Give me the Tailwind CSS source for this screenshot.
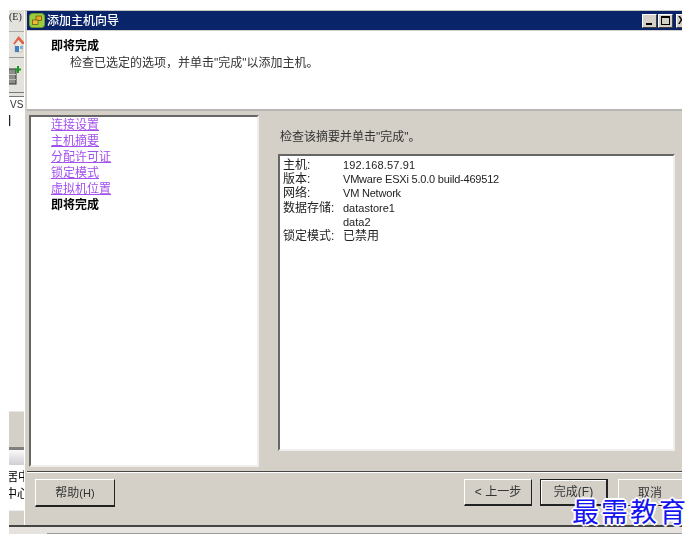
<!DOCTYPE html>
<html lang="zh-CN">
<head>
  <meta charset="UTF-8">
  <title>添加主机向导</title>
  <script src="https://cdn.jsdelivr.net/npm/@tailwindcss/browser@4"></script>
</head>
<body class="bg-white">
  <div class="relative w-[694px] h-[541px] overflow-hidden bg-white pt-[10px] pl-[9px] pr-[12px] pb-[7px] font-['Liberation_Sans','Noto_Sans_CJK_SC',sans-serif] text-[12px] text-[#222]">
    <div class="flex flex-col h-full blur-[0.3px]">
      <div class="flex h-[515px]">
        <!-- main window behind the wizard -->
        <div class="w-[15px] flex flex-col overflow-hidden shrink-0 bg-white">
          <div class="h-[22px] bg-[#e4e2dd] border-b border-[#aaa] text-[10px] leading-[12px] pt-[1px] font-['Liberation_Serif','Noto_Sans_CJK_SC',serif] whitespace-nowrap">(E)</div>
          <div class="h-[26px] bg-[#e4e2dd] border-b border-[#999] flex justify-end items-center">
            <svg width="11" height="17" viewBox="0 0 11 17" class="shrink-0">
              <path d="M0 8 L5.5 0 L11 6 V8 H9 L5.5 4 L2 8Z" fill="#e0604a"/>
              <path d="M2 8 L5.5 4 L9 8 V16 H2Z" fill="#efe9da" stroke="#b9a98a" stroke-width="0.5"/>
              <rect x="2" y="10" width="4" height="6" fill="#3f7fc4"/>
              <rect x="7" y="10" width="3" height="3" fill="#7fb0dc"/>
            </svg>
          </div>
          <div class="h-[34px] bg-[#e4e2dd]">
            <svg width="15" height="20" viewBox="0 0 15 20" class="mt-[8px]">
              <rect x="-1" y="3" width="8" height="15" fill="#8e8e88" stroke="#333"/>
              <rect x="0" y="8" width="7" height="1" fill="#ccc"/>
              <rect x="0" y="13" width="7" height="1" fill="#bbb"/>
              <path d="M9 0 V7 M6 3.5 H12" stroke="#1a9a22" stroke-width="2" fill="none"/>
            </svg>
          </div>
          <div class="h-[5px] bg-[#e4e2dd] border-y border-[#777]"></div>
          <div class="h-[314px] bg-white">
            <div class="text-[10px] leading-[12px] pt-[2px] pl-[1px] text-[#333] flex items-center">VS<span class="w-[1px] h-[11px] bg-[#333] ml-[1px]"></span></div>
            <div class="mt-[4px] w-[2px] h-[11px] bg-[#222] border-r border-[#bcd]"></div>
          </div>
          <div class="h-[36px] bg-[#d4d0c8] border-t border-[#e8e6e2]"></div>
          <div class="h-[3px] bg-[#808080]"></div>
          <div class="h-[15px] bg-gradient-to-b from-[#fafafa] to-[#cfcfd4]"></div>
          <div class="h-[45px] bg-white text-[12px] leading-[17px] pt-[4px] text-black whitespace-nowrap">
            <div class="-ml-[3px]">居中</div>
            <div class="-ml-[4px]">中心</div>
          </div>
          <div class="flex-1 bg-[#d4d0c8] border-t border-[#eee]"></div>
        </div>

        <!-- wizard -->
        <div class="flex-1 min-w-0 flex flex-col overflow-hidden bg-[#d4d0c8] border-l border-white pl-[2px] border-t border-t-[#c8c6c0]">
          <div class="h-[19px] shrink-0 flex items-center bg-[#0a246a] pl-[2px] text-white text-[12px]">
            <svg width="16" height="15" viewBox="0 0 16 15" class="shrink-0">
              <rect x="0.5" y="0.5" width="15" height="14" rx="3" fill="#9ccc40" stroke="#6f9a28"/>
              <rect x="7" y="3" width="5.5" height="4.5" fill="#f0a818" stroke="#5a5018" stroke-width="0.7"/>
              <rect x="3.5" y="7" width="5.5" height="4.5" fill="#f6bc30" stroke="#5a5018" stroke-width="0.7"/>
            </svg>
            <span class="ml-[2px] font-medium">添加主机向导</span>
            <div class="ml-auto flex items-start -mr-[9px]">
              <div class="w-[15px] h-[14px] bg-[#d4d0c8] border-t border-l border-white border-r border-b border-r-[#404040] border-b-[#404040] flex items-end justify-center pb-[2px]">
                <span class="block w-[6px] h-[2px] bg-black -ml-[1px]"></span>
              </div>
              <div class="w-[15px] h-[14px] ml-[1px] bg-[#d4d0c8] border-t border-l border-white border-r border-b border-r-[#404040] border-b-[#404040] flex items-center justify-center">
                <span class="block w-[9px] h-[9px] border border-black border-t-2"></span>
              </div>
              <div class="w-[15px] h-[14px] ml-[3px] bg-[#d4d0c8] border-t border-l border-white border-r border-b border-r-[#404040] border-b-[#404040] text-black text-[11px] font-bold leading-[11px] pl-[1px]">X</div>
            </div>
          </div>
          <div class="h-[80px] shrink-0 mt-[1px] bg-white border-b-2 border-[#b8b6b2] pl-[24px] pt-[7px]">
            <div class="font-bold text-black leading-[16px]">即将完成</div>
            <div class="ml-[19px] mt-[1px] leading-[16px] text-[#333]">检查已选定的选项，并单击"完成"以添加主机。</div>
          </div>

          <div class="flex h-[360px] shrink-0">
            <div class="mt-[4px] ml-[2px] w-[230px] h-[352px] bg-white border-2 border-t-[#666] border-l-[#666] border-r-[#eee] border-b-[#eee] pl-[20px] leading-[16px]">
              <a class="block underline text-[#a24ff0]">连接设置</a>
              <a class="block underline text-[#a24ff0]">主机摘要</a>
              <a class="block underline text-[#a24ff0]">分配许可证</a>
              <a class="block underline text-[#a24ff0]">锁定模式</a>
              <a class="block underline text-[#a24ff0]">虚拟机位置</a>
              <div class="font-bold text-black">即将完成</div>
            </div>
            <div class="flex-1 pl-[19px] pr-[7px] pt-[18px]">
              <div class="leading-[16px] pl-[2px] text-[#333]">检查该摘要并单击"完成"。</div>
              <div class="mt-[9px] h-[297px] bg-white border-2 border-t-[#666] border-l-[#666] border-r-[#eee] border-b-[#eee] pl-[3px] pt-[2px]">
                <div class="grid grid-cols-[60px_1fr] leading-[14.2px] text-[#222]">
                  <span>主机:</span><span class="text-[11px] tracking-[0.15px]">192.168.57.91</span>
                  <span>版本:</span><span class="text-[11px] tracking-[-0.2px]">VMware ESXi 5.0.0 build-469512</span>
                  <span>网络:</span><span class="text-[11px] tracking-[-0.2px]">VM Network</span>
                  <span>数据存储:</span><span class="text-[11px]">datastore1</span>
                  <span></span><span class="text-[11px]">data2</span>
                  <span>锁定模式:</span><span>已禁用</span>
                </div>
              </div>
            </div>
          </div>

          <div class="flex-1 border-t border-[#444] flex items-start pt-[7px] relative before:absolute before:inset-x-0 before:top-0 before:h-[1px] before:bg-white">
            <button class="ml-[8px] w-[80px] h-[28px] bg-[#d4d0c8] border border-t-white border-l-white border-r-[#222] border-b-[#222] border-b-2 text-[#333]">帮助<span class="text-[11px]">(H)</span></button>
            <div class="ml-auto flex gap-[8px] -mr-[4px]">
              <button class="w-[68px] h-[27px] bg-[#d4d0c8] border border-t-white border-l-white border-r-[#222] border-b-[#222] border-b-2 text-[#333]">&lt; 上一步</button>
              <button class="w-[68px] h-[27px] bg-[#d4d0c8] border border-[#222] border-r-2 border-b-2 shadow-[inset_1px_1px_0_#fff] text-[#333]">完成(F)</button>
              <button class="ml-[2px] w-[68px] h-[27px] pr-[4px] bg-[#d4d0c8] border border-t-white border-l-white border-r-[#222] border-b-[#222] text-[#333]">取消</button>
            </div>
          </div>
        </div>
      </div>

      <div class="h-[2px] shrink-0 bg-[#444]"></div>
      <div class="flex-1 bg-[#e6e3de] flex items-end">
        <div class="ml-[38px] flex-1 h-[1px] bg-[#999]"></div>
      </div>
    </div>

    <!-- watermark over the dialog -->
    <div class="absolute left-[572px] top-[494px] text-[27px] leading-[34px] tracking-[2px] whitespace-nowrap text-[#1414f0] font-['Noto_Sans_CJK_SC',serif] [text-shadow:1px_1px_0_#fff,-1px_-1px_0_#fff,1px_-1px_0_#fff,-1px_1px_0_#fff,2px_0_0_#fff,-2px_0_0_#fff,0_2px_0_#fff,0_-2px_0_#fff]">最需教育</div>
  </div>
</body>
</html>
